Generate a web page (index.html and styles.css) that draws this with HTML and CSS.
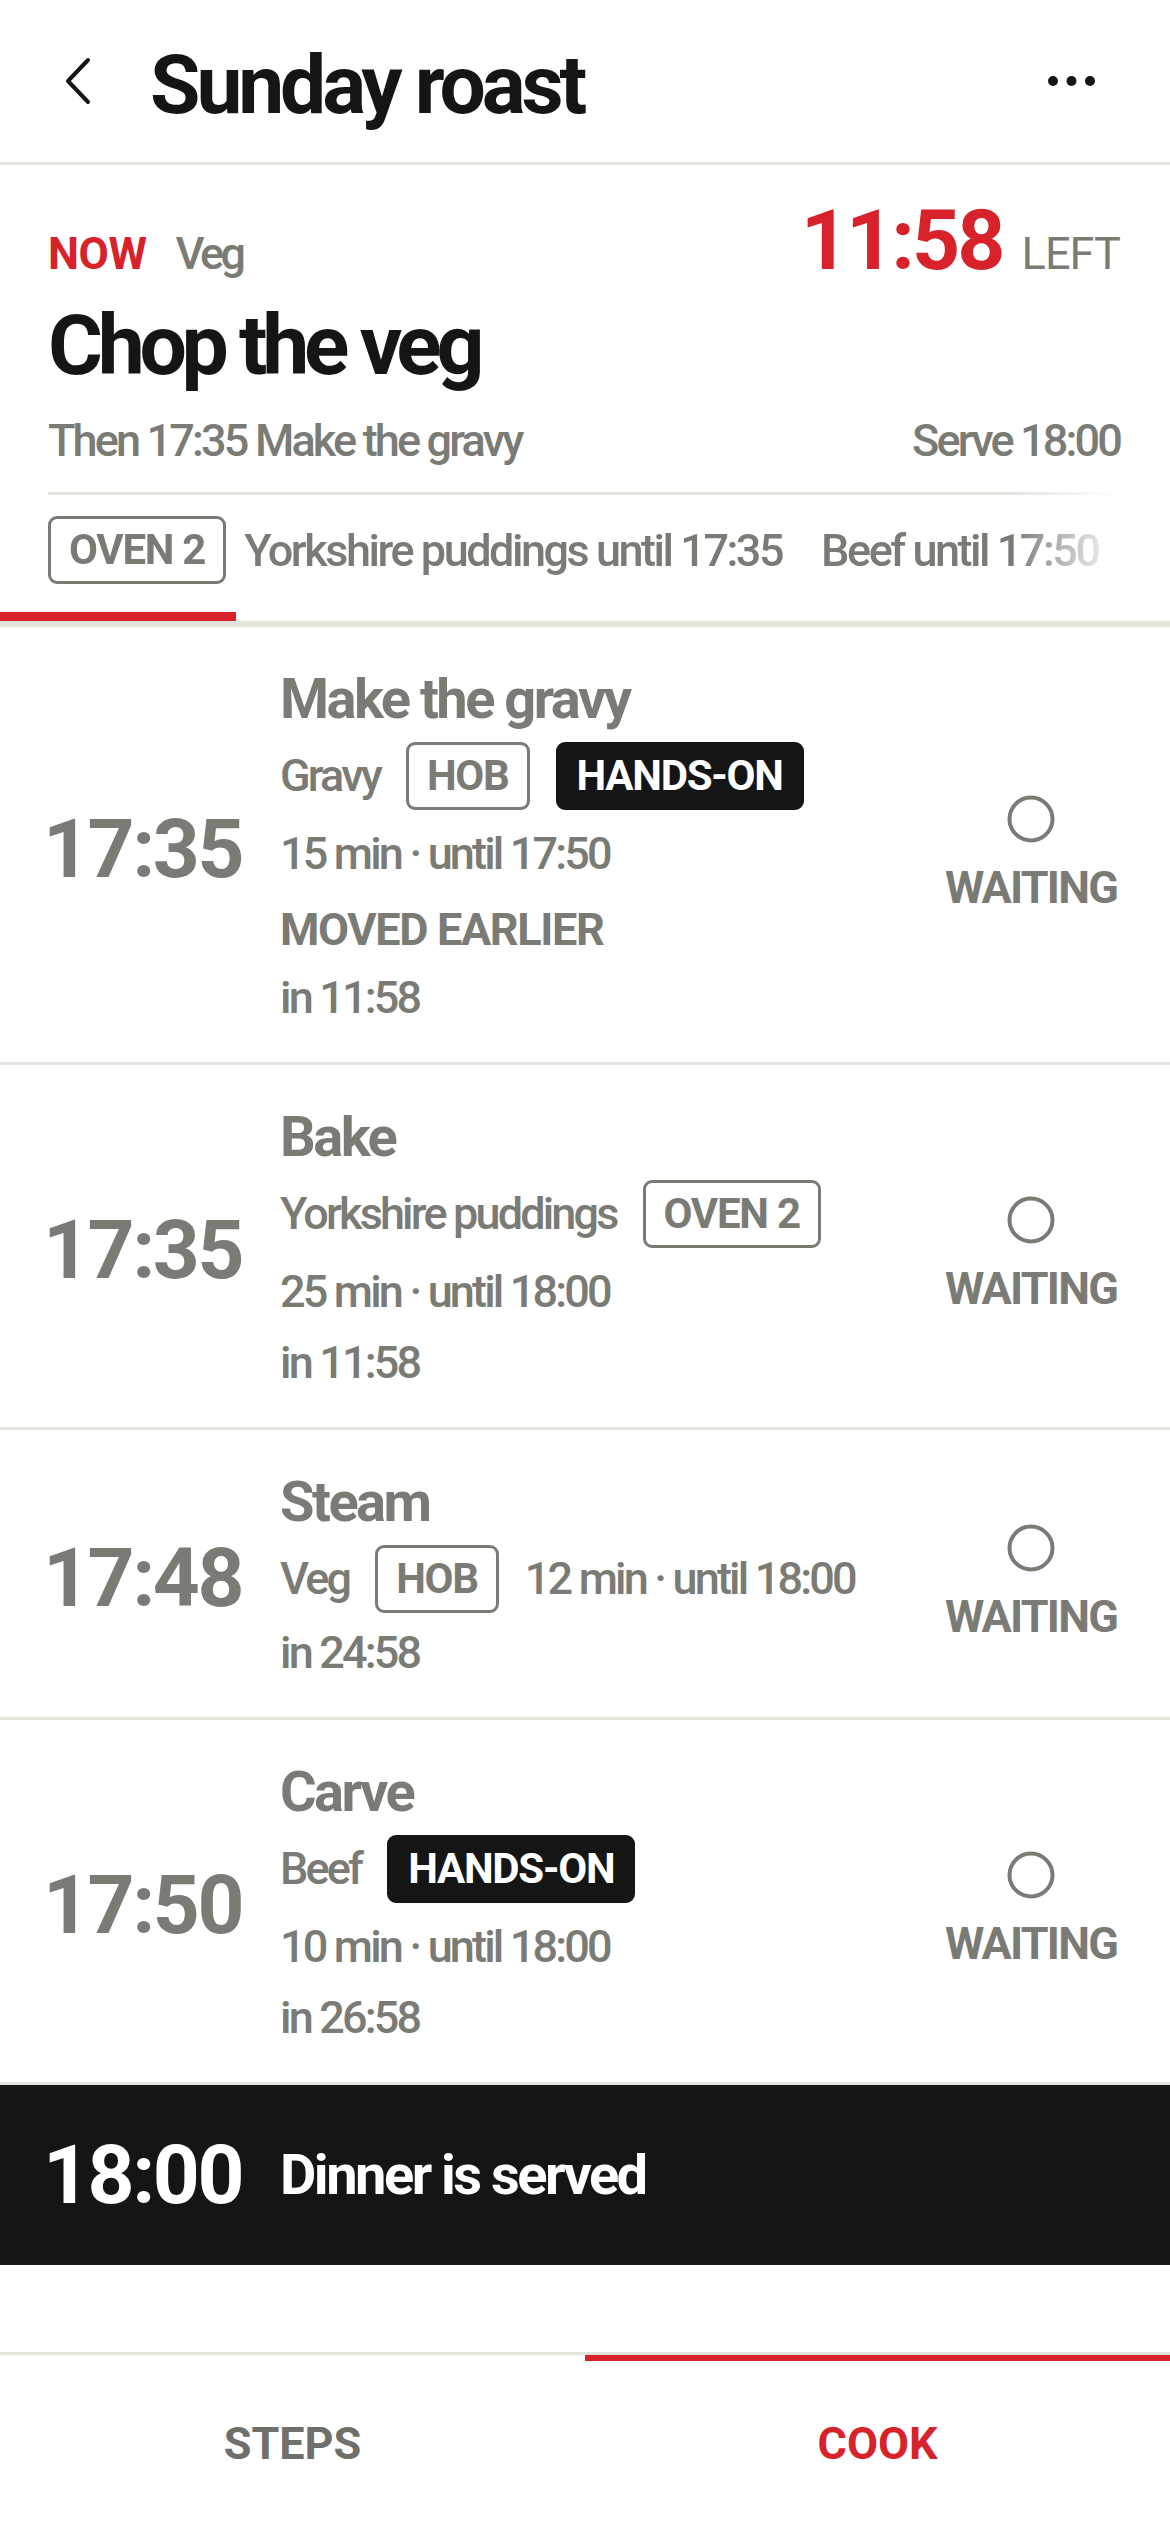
FILE: index.html
```html
<!DOCTYPE html>
<html>
  <head>
    <title>Sunday roast</title>
    <meta name="viewport" content="width=device-width, initial-scale=1" />
    <link rel="stylesheet" href="styles.css">
  </head>
  <body>
    <div class="app">
      <header class="topbar">
        <button class="icon-btn back" aria-label="Back">
          <svg width="30" height="50" viewBox="0 0 30 50"><path d="M26 4 L6 25 L26 46" fill="none" stroke="#151515" stroke-width="4" stroke-linecap="round" stroke-linejoin="round"/></svg>
        </button>
        <h1 class="title">Sunday roast</h1>
        <button class="icon-btn more" aria-label="More">
          <svg width="47" height="12" viewBox="0 0 47 12"><circle cx="5" cy="6" r="5" fill="#151515"/><circle cx="23.5" cy="6" r="5" fill="#151515"/><circle cx="42" cy="6" r="5" fill="#151515"/></svg>
        </button>
      </header>

      <section class="now">
        <div class="now-head">
          <div class="now-step">
            <span class="now-tag">NOW</span>
            <span class="now-food">Veg</span>
          </div>
          <div class="countdown">
            <span class="countdown-time">11:58</span>
            <span class="countdown-unit">LEFT</span>
          </div>
        </div>
        <h2 class="now-title">Chop the veg</h2>
        <div class="now-next">
          <span>Then 17:35 Make the gravy</span>
          <span>Serve 18:00</span>
        </div>
        <div class="equipment">
          <div class="equipment-item">
            <span class="badge">OVEN 2</span>
            <span>Yorkshire puddings until 17:35</span>
          </div>
          <div class="equipment-item">
            <span>Beef until 17:50</span>
          </div>
        </div>
      </section>
      <div class="progress"><div class="progress-fill" style="width:20.2%"></div></div>

      <ol class="timeline">
        <li class="step">
          <div class="step-time">17:35</div>
          <div class="step-body">
            <div class="step-name">Make the gravy</div>
            <div class="step-meta">
              <span>Gravy</span>
              <span class="badge">HOB</span>
              <span class="badge badge-dark">HANDS-ON</span>
              <span>15 min · until 17:50</span>
            </div>
            <div class="step-flag">MOVED EARLIER</div>
            <div class="step-eta">in 11:58</div>
          </div>
          <div class="step-status">
            <svg width="50" height="50" viewBox="0 0 50 50"><circle cx="25" cy="25" r="21.5" fill="none" stroke="#7b7b76" stroke-width="4"/></svg>
            <span>WAITING</span>
          </div>
        </li>
        <li class="step">
          <div class="step-time">17:35</div>
          <div class="step-body">
            <div class="step-name">Bake</div>
            <div class="step-meta">
              <span>Yorkshire puddings</span>
              <span class="badge">OVEN 2</span>
              <span>25 min · until 18:00</span>
            </div>
            <div class="step-eta">in 11:58</div>
          </div>
          <div class="step-status">
            <svg width="50" height="50" viewBox="0 0 50 50"><circle cx="25" cy="25" r="21.5" fill="none" stroke="#7b7b76" stroke-width="4"/></svg>
            <span>WAITING</span>
          </div>
        </li>
        <li class="step">
          <div class="step-time">17:48</div>
          <div class="step-body">
            <div class="step-name">Steam</div>
            <div class="step-meta">
              <span>Veg</span>
              <span class="badge">HOB</span>
              <span>12 min · until 18:00</span>
            </div>
            <div class="step-eta">in 24:58</div>
          </div>
          <div class="step-status">
            <svg width="50" height="50" viewBox="0 0 50 50"><circle cx="25" cy="25" r="21.5" fill="none" stroke="#7b7b76" stroke-width="4"/></svg>
            <span>WAITING</span>
          </div>
        </li>
        <li class="step">
          <div class="step-time">17:50</div>
          <div class="step-body">
            <div class="step-name">Carve</div>
            <div class="step-meta">
              <span>Beef</span>
              <span class="badge badge-dark">HANDS-ON</span>
              <span>10 min · until 18:00</span>
            </div>
            <div class="step-eta">in 26:58</div>
          </div>
          <div class="step-status">
            <svg width="50" height="50" viewBox="0 0 50 50"><circle cx="25" cy="25" r="21.5" fill="none" stroke="#7b7b76" stroke-width="4"/></svg>
            <span>WAITING</span>
          </div>
        </li>
      </ol>

      <div class="serve">
        <div class="serve-time">18:00</div>
        <div class="serve-text">Dinner is served</div>
      </div>

      <nav class="tabs">
        <a class="tab">STEPS</a>
        <a class="tab active">COOK</a>
      </nav>
    </div>
  </body>
</html>
```

FILE: styles.css
```css
*{
  box-sizing:border-box;
}
body{
  font-family: Roboto, "Noto Sans", sans-serif;
  font-weight:500;
  color:#7b7b76;
  background-color:white;
  padding:0;
  margin:0;
}
h1, h2, ol{
  margin:0;
  padding:0;
}
.app{
  min-height:100vh;
  display:flex;
  flex-direction:column;
}

/* top bar */
.topbar{
  display:flex;
  align-items:center;
  height:165px;
  padding:0 75px 0 62px;
  border-bottom:3px solid #e4e4df;
}
.icon-btn{
  border:0;
  background:none;
  padding:0;
  display:flex;
}
.title{
  margin:8px 0 0 58px;
  font-size:82px;
  line-height:1;
  font-weight:700;
  letter-spacing:-0.05em;
  color:#151515;
}
.more{
  margin-left:auto;
}

/* current step */
.now{
  padding:34px 50px 0 48px;
}
.now-head{
  display:flex;
  justify-content:space-between;
  align-items:baseline;
}
.now-step, .countdown{
  display:flex;
  align-items:baseline;
}
.now-tag{
  font-size:44px;
  line-height:1;
  font-weight:700;
  letter-spacing:-0.01em;
  color:#d8222b;
}
.now-food{
  margin-left:29px;
  font-size:45px;
  line-height:1;
  letter-spacing:-0.08em;
}
.countdown-time{
  font-size:84px;
  line-height:1;
  font-weight:700;
  letter-spacing:-0.035em;
  color:#d8222b;
}
.countdown-unit{
  margin-left:19px;
  font-size:45px;
  line-height:1;
  font-weight:400;
  letter-spacing:-0.02em;
}
.now-title{
  margin-top:21px;
  font-size:84px;
  line-height:1;
  font-weight:700;
  letter-spacing:-0.063em;
  color:#151515;
}
.now-next{
  margin-top:30px;
  display:flex;
  justify-content:space-between;
  font-size:45px;
  line-height:1;
  letter-spacing:-0.063em;
}
.equipment{
  margin-top:29px;
  padding:21px 0 28px;
  border-top:3px solid #e4e4df;
  display:flex;
  gap:39px;
  overflow:hidden;
  white-space:nowrap;
  font-size:45px;
  line-height:1;
  letter-spacing:-0.055em;
  -webkit-mask-image:linear-gradient(to right, #000 90%, transparent 100%);
  mask-image:linear-gradient(to right, #000 90%, transparent 100%);
}
.equipment-item{
  display:flex;
  align-items:center;
  gap:18px;
  flex-shrink:0;
}
.progress{
  height:15px;
  border-bottom:6px solid #e4e4df;
}
.progress-fill{
  height:9px;
  background:#d8222b;
}

/* badges */
.badge{
  display:inline-flex;
  align-items:center;
  height:68px;
  padding:0 18px;
  border:3px solid #7b7b76;
  border-radius:9px;
  font-size:42px;
  line-height:1;
  font-weight:700;
  letter-spacing:-0.03em;
  color:#7b7b76;
}
.badge-dark{
  padding:0 18px;
  background:#151515;
  border-color:#151515;
  color:white;
}

/* timeline */
.timeline{
  list-style:none;
}
.step{
  display:grid;
  grid-template-columns:237px 1fr 190px;
  align-items:center;
  padding:38px 44px 30px 43px;
  border-bottom:3px solid #e4e4df;
}
.step-time{
  font-size:82px;
  line-height:1;
  font-weight:700;
  letter-spacing:-0.03em;
}
.step-body{
  display:flex;
  flex-direction:column;
  font-size:45px;
  line-height:68px;
  letter-spacing:-0.063em;
}
.step-name{
  font-size:56px;
  font-weight:700;
  letter-spacing:-0.045em;
}
.step-meta{
  margin:9px 0 6px;
  display:flex;
  flex-wrap:wrap;
  align-items:center;
  column-gap:26px;
  row-gap:13px;
  line-height:62px;
}
.step-meta > span:not(.badge){
  white-space:nowrap;
}
.step-flag{
  margin-top:5px;
  font-weight:700;
  letter-spacing:-0.03em;
}
.step-status{
  margin-top:6px;
  display:flex;
  flex-direction:column;
  align-items:center;
  gap:21px;
  font-size:45px;
  line-height:1;
  font-weight:700;
  letter-spacing:-0.04em;
}

/* serve */
.serve{
  display:grid;
  grid-template-columns:237px 1fr;
  align-items:center;
  height:180px;
  padding-left:43px;
  background:#151515;
  color:white;
}
.serve-time{
  font-size:82px;
  line-height:1;
  font-weight:700;
  letter-spacing:-0.03em;
}
.serve-text{
  font-size:56px;
  line-height:1;
  font-weight:700;
  letter-spacing:-0.045em;
}

/* tabs */
.tabs{
  margin-top:auto;
  display:grid;
  grid-template-columns:1fr 1fr;
  height:180px;
  border-top:3px solid #e4e4df;
}
.tab{
  display:flex;
  align-items:center;
  justify-content:center;
  font-size:45px;
  line-height:1;
  font-weight:700;
  letter-spacing:0;
  color:#6f6f6b;
}
.tab.active{
  color:#d8222b;
  box-shadow:inset 0 6px 0 #d8222b;
}
```
